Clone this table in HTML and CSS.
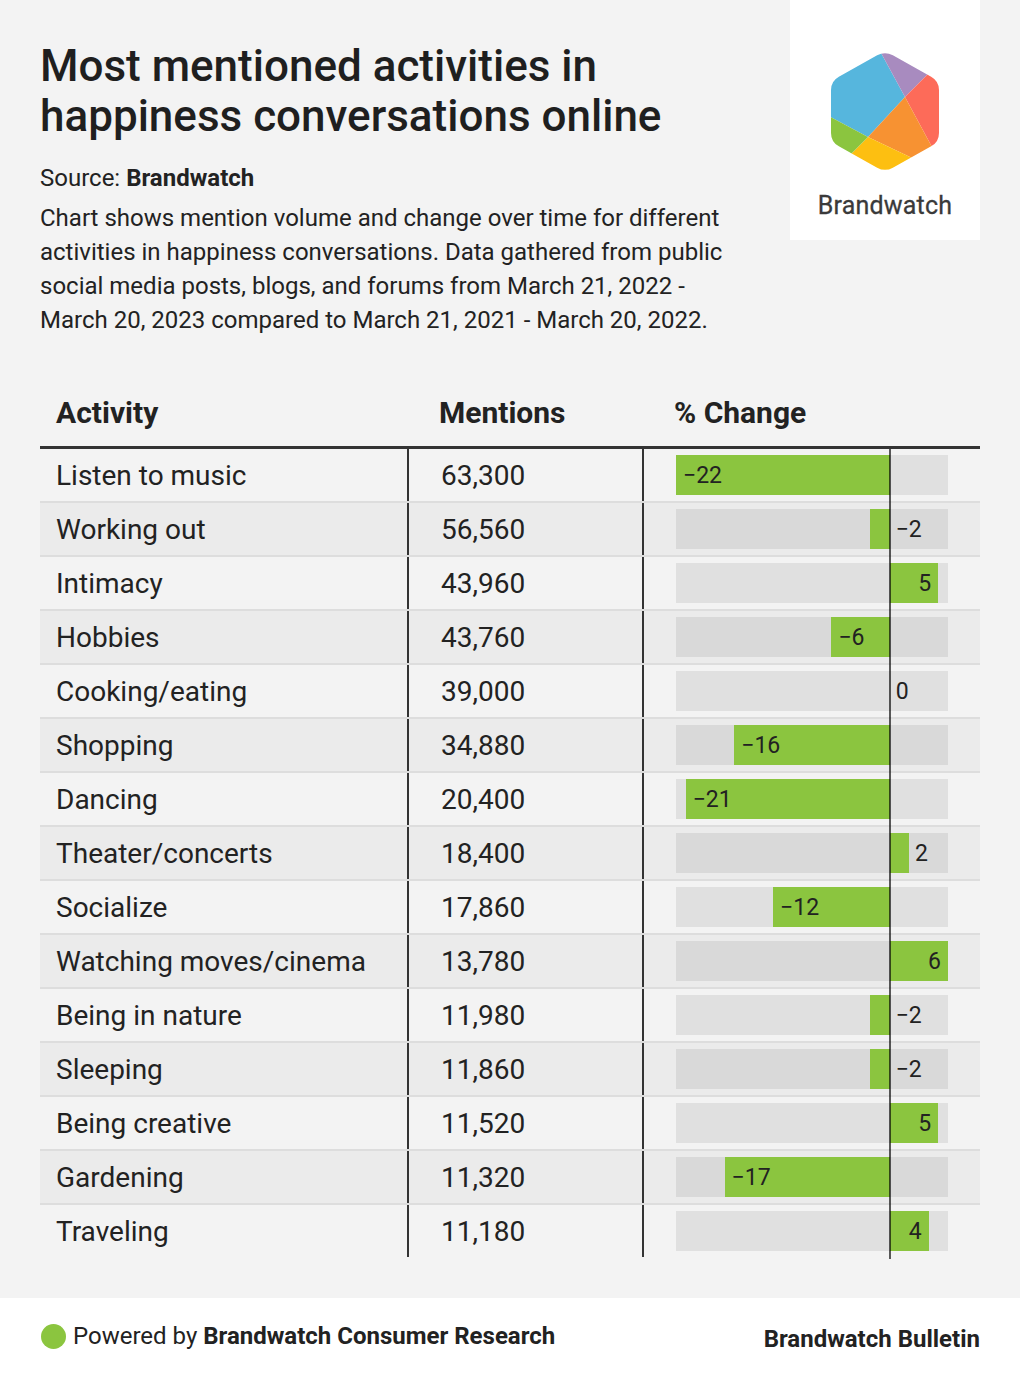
FILE: index.html
```html
<!DOCTYPE html>
<html>
<head>
<meta charset="utf-8">
<link rel="stylesheet" href="styles.css">
</head>
<body>
<div class="page">
  <header class="top">
    <div class="intro">
      <h1>Most mentioned activities in<br>happiness conversations online</h1>
      <p class="source">Source: <b>Brandwatch</b></p>
      <p class="desc">Chart shows mention volume and change over time for different<br>activities in happiness conversations. Data gathered from public<br>social media posts, blogs, and forums from March 21, 2022 -<br>March 20, 2023 compared to March 21, 2021 - March 20, 2022.</p>
    </div>
    <div class="logo">
      <svg class="hex" width="110" height="124" viewBox="0 0 110 124">
        <defs>
          <clipPath id="hexclip">
            <path d="M62.86 5.37 L101.14 26.63 Q109 31 109 40 L109 83 Q109 92 101.14 96.37 L62.86 117.63 Q55 122 47.14 117.63 L8.86 96.37 Q1 92 1 83 L1 40 Q1 31 8.86 26.63 L47.14 5.37 Q55 1 62.86 5.37 Z"/>
          </clipPath>
        </defs>
        <g clip-path="url(#hexclip)">
          <polygon fill="#56b6dd" points="-20,56 38,87 75,47 44,-10 -20,-10"/>
          <polygon fill="#a88bbf" points="44,-10 75,47 130,-8"/>
          <polygon fill="#fd6b59" points="75,47 130,-8 140,-8 140,130 112,115.5"/>
          <polygon fill="#f79232" points="75,47 112,115.5 92.6,113 38,87"/>
          <polygon fill="#fdbf11" points="38,87 92.6,113 60,140 14,111"/>
          <polygon fill="#8bc53f" points="38,87 14,111 -10,111 -20,56"/>
        </g>
      </svg>
      <span class="logo-name">Brandwatch</span>
    </div>
  </header>

  <section class="table">
    <div class="thead">
      <div class="th c1">Activity</div>
      <div class="th c2">Mentions</div>
      <div class="th c3">% Change</div>
    </div>

    <div class="row">
      <div class="cell c1">Listen to music</div>
      <div class="cell c2">63,300</div>
      <div class="cell c3"><div class="neg"><div class="track"><div class="bar in" style="width:213.7px">−22</div></div></div><div class="pos"><div class="track"></div></div></div>
    </div>
    <div class="row">
      <div class="cell c1">Working out</div>
      <div class="cell c2">56,560</div>
      <div class="cell c3"><div class="neg"><div class="track"><div class="bar" style="width:19.4px"></div></div></div><div class="pos"><div class="track"><span class="out">−2</span></div></div></div>
    </div>
    <div class="row">
      <div class="cell c1">Intimacy</div>
      <div class="cell c2">43,960</div>
      <div class="cell c3"><div class="neg"><div class="track"></div></div><div class="pos"><div class="track"><div class="bar in" style="width:48.6px">5</div></div></div></div>
    </div>
    <div class="row">
      <div class="cell c1">Hobbies</div>
      <div class="cell c2">43,760</div>
      <div class="cell c3"><div class="neg"><div class="track"><div class="bar in" style="width:58.3px">−6</div></div></div><div class="pos"><div class="track"></div></div></div>
    </div>
    <div class="row">
      <div class="cell c1">Cooking/eating</div>
      <div class="cell c2">39,000</div>
      <div class="cell c3"><div class="neg"><div class="track"></div></div><div class="pos"><div class="track"><span class="out">0</span></div></div></div>
    </div>
    <div class="row">
      <div class="cell c1">Shopping</div>
      <div class="cell c2">34,880</div>
      <div class="cell c3"><div class="neg"><div class="track"><div class="bar in" style="width:155.4px">−16</div></div></div><div class="pos"><div class="track"></div></div></div>
    </div>
    <div class="row">
      <div class="cell c1">Dancing</div>
      <div class="cell c2">20,400</div>
      <div class="cell c3"><div class="neg"><div class="track"><div class="bar in" style="width:204px">−21</div></div></div><div class="pos"><div class="track"></div></div></div>
    </div>
    <div class="row">
      <div class="cell c1">Theater/concerts</div>
      <div class="cell c2">18,400</div>
      <div class="cell c3"><div class="neg"><div class="track"></div></div><div class="pos"><div class="track"><div class="bar" style="width:19.4px"></div><span class="out">2</span></div></div></div>
    </div>
    <div class="row">
      <div class="cell c1">Socialize</div>
      <div class="cell c2">17,860</div>
      <div class="cell c3"><div class="neg"><div class="track"><div class="bar in" style="width:116.6px">−12</div></div></div><div class="pos"><div class="track"></div></div></div>
    </div>
    <div class="row">
      <div class="cell c1">Watching moves/cinema</div>
      <div class="cell c2">13,780</div>
      <div class="cell c3"><div class="neg"><div class="track"></div></div><div class="pos"><div class="track"><div class="bar in" style="width:58.3px">6</div></div></div></div>
    </div>
    <div class="row">
      <div class="cell c1">Being in nature</div>
      <div class="cell c2">11,980</div>
      <div class="cell c3"><div class="neg"><div class="track"><div class="bar" style="width:19.4px"></div></div></div><div class="pos"><div class="track"><span class="out">−2</span></div></div></div>
    </div>
    <div class="row">
      <div class="cell c1">Sleeping</div>
      <div class="cell c2">11,860</div>
      <div class="cell c3"><div class="neg"><div class="track"><div class="bar" style="width:19.4px"></div></div></div><div class="pos"><div class="track"><span class="out">−2</span></div></div></div>
    </div>
    <div class="row">
      <div class="cell c1">Being creative</div>
      <div class="cell c2">11,520</div>
      <div class="cell c3"><div class="neg"><div class="track"></div></div><div class="pos"><div class="track"><div class="bar in" style="width:48.6px">5</div></div></div></div>
    </div>
    <div class="row">
      <div class="cell c1">Gardening</div>
      <div class="cell c2">11,320</div>
      <div class="cell c3"><div class="neg"><div class="track"><div class="bar in" style="width:165.1px">−17</div></div></div><div class="pos"><div class="track"></div></div></div>
    </div>
    <div class="row">
      <div class="cell c1">Traveling</div>
      <div class="cell c2">11,180</div>
      <div class="cell c3"><div class="neg"><div class="track"></div></div><div class="pos"><div class="track"><div class="bar in" style="width:38.9px">4</div></div></div></div>
    </div>
  </section>

  <footer class="foot">
    <div class="powered"><span class="dot"></span>Powered by <b>Brandwatch Consumer Research</b></div>
    <div class="bulletin">Brandwatch Bulletin</div>
  </footer>
</div>
</body>
</html>
```

FILE: styles.css
```css
* { box-sizing: border-box; }
body {
  margin: 0;
  background: #f3f3f3;
  font-family: Roboto, "Liberation Sans", sans-serif;
  color: #222;
}
.page { width: 1020px; }

.top {
  display: flex;
  justify-content: space-between;
  align-items: flex-start;
  padding: 0 40px;
}
.intro { padding-top: 41px; }
h1 {
  margin: 0;
  font-size: 44px;
  line-height: 50px;
  font-weight: 500;
  color: #1f1f1f;
}
.source {
  margin: 20px 0 0;
  font-size: 24px;
  line-height: 34px;
}
.source b { font-weight: 700; }
.desc {
  margin: 6px 0 0;
  font-size: 24px;
  line-height: 34px;
}
.logo {
  width: 190px;
  height: 240px;
  background: #fff;
  display: flex;
  flex-direction: column;
  align-items: center;
  padding-top: 50px;
}
.hex { display: block; }
.logo-name {
  margin-top: 17px;
  font-size: 25px;
  line-height: 30px;
  color: #3a3a3a;
  letter-spacing: 0.2px;
  -webkit-text-stroke: 0.3px #3a3a3a;
}

.table {
  margin: 41px 40px 0;
}
.thead {
  display: grid;
  grid-template-columns: 367px 235px 338px;
  height: 71px;
  align-items: center;
  border-bottom: 3px solid #333;
}
.th {
  font-size: 30px;
  font-weight: 700;
  color: #222;
}
.th.c1 { padding-left: 16px; }
.th.c2 { padding-left: 32px; }
.th.c3 { padding-left: 32px; }

.row {
  display: grid;
  grid-template-columns: 367px 235px 338px;
  height: 54px;
  border-bottom: 2px solid #dddddd;
}
.row:nth-child(odd) { background: #ebebeb; }
.row:last-child { border-bottom: none; height: 52px; }
.cell {
  display: flex;
  align-items: center;
  font-size: 28px;
  color: #222;
}
.cell.c1 { padding-left: 16px; }
.cell.c2 { padding-left: 32px; border-left: 2px solid #333; }
.cell.c3 {
  padding-left: 32px;
  border-left: 2px solid #333;
  align-items: stretch;
}
.neg, .pos {
  display: flex;
  align-items: center;
}
.neg { width: 213.7px; }
.pos { width: 58.3px; position: relative; }
.pos::before {
  content: "";
  position: absolute;
  left: -1px;
  top: 0;
  bottom: -2px;
  width: 2px;
  background: rgba(0, 0, 0, 0.64);
  z-index: 2;
}
.track {
  width: 100%;
  height: 40px;
  background: rgba(0, 0, 0, 0.075);
  display: flex;
  align-items: stretch;
}
.neg .track { justify-content: flex-end; }
.bar {
  background: #8bc53f;
  display: flex;
  align-items: center;
  font-size: 23px;
  color: #222;
  flex: none;
}
.neg .bar.in { padding-left: 7px; }
.pos .bar.in { justify-content: flex-end; padding-right: 7px; }
.out {
  display: flex;
  align-items: center;
  font-size: 23px;
  padding-left: 6px;
  color: #222;
}

.foot {
  margin-top: 41px;
  height: 82px;
  background: #fff;
  display: flex;
  justify-content: space-between;
  align-items: center;
  padding: 0 40px 0 41px;
}
.powered {
  display: flex;
  align-items: center;
  font-size: 24px;
  color: #222;
  white-space: pre;
  margin-top: -6px;
}
.powered b { font-weight: 700; }
.dot {
  width: 25px;
  height: 25px;
  border-radius: 50%;
  background: #8bc53f;
  margin-right: 7px;
}
.bulletin {
  font-size: 24px;
  font-weight: 700;
  color: #222;
}
```
